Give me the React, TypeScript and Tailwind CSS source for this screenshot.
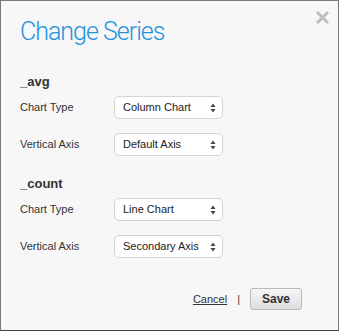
const series = [
  { name: "_avg", chartType: "Column Chart", axis: "Default Axis" },
  { name: "_count", chartType: "Line Chart", axis: "Secondary Axis" },
];

function UpDown() {
  return (
    <svg width="6" height="10" viewBox="0 0 6 10" className="text-[#444]">
      <path d="M3 0.5 L5.5 4 L0.5 4 Z" fill="currentColor" />
      <path d="M3 9.5 L5.5 6 L0.5 6 Z" fill="currentColor" />
    </svg>
  );
}

function FakeSelect({ value }: { value: string }) {
  return (
    <div className="flex h-[23px] w-[109px] items-center justify-between rounded-[5px] border border-[#d4d4d4] bg-white pl-[8px] pr-[6px] text-[11px] text-[#222]">
      <span>{value}</span>
      <UpDown />
    </div>
  );
}

function Row({ label, value }: { label: string; value: string }) {
  return (
    <div className="flex h-[23px] items-center">
      <span className="w-[94px] text-[11px] text-[#333]">{label}</span>
      <FakeSelect value={value} />
    </div>
  );
}

export default function App() {
  return (
    <div
      className="relative flex h-[331px] w-[339px] flex-col border border-[#7a7a7a] border-b-[#444] bg-[#f7f7f7] px-[19px]"
      style={{ fontFamily: '"Liberation Sans", Arial, sans-serif' }}
    >
      <button className="absolute right-[8px] top-[9px] text-[#bdbdbd]">
        <svg width="15" height="15" viewBox="0 0 15 15">
          <path d="M2 2 L13 13 M13 2 L2 13" stroke="currentColor" strokeWidth="3" />
        </svg>
      </button>

      <h1
        className="mt-[16px] text-[25px] font-light leading-[30px] tracking-[-1px] text-[#1f93de]"
        style={{ fontFamily: 'Roboto, "Liberation Sans", sans-serif' }}
      >
        Change Series
      </h1>

      <div className="mt-[27px] flex flex-col">
        {series.map((s, i) => (
          <div key={s.name} className={i > 0 ? "mt-[20px]" : ""}>
            <div className="text-[13px] font-bold leading-[16px] text-[#333]">{s.name}</div>
            <div className="mt-[6px] flex flex-col gap-[14px]">
              <Row label="Chart Type" value={s.chartType} />
              <Row label="Vertical Axis" value={s.axis} />
            </div>
          </div>
        ))}
      </div>

      <div className="mt-auto mb-[20px] flex items-center justify-end gap-[10px] pr-[17px]">
        <a className="text-[11px] text-[#333] underline">Cancel</a>
        <span className="text-[11px] text-[#444]">|</span>
        <button className="h-[22px] w-[52px] rounded-[3px] border border-[#bbb] bg-gradient-to-b from-[#f6f6f6] to-[#dedede] text-[12px] font-bold text-[#333]">
          Save
        </button>
      </div>
    </div>
  );
}
